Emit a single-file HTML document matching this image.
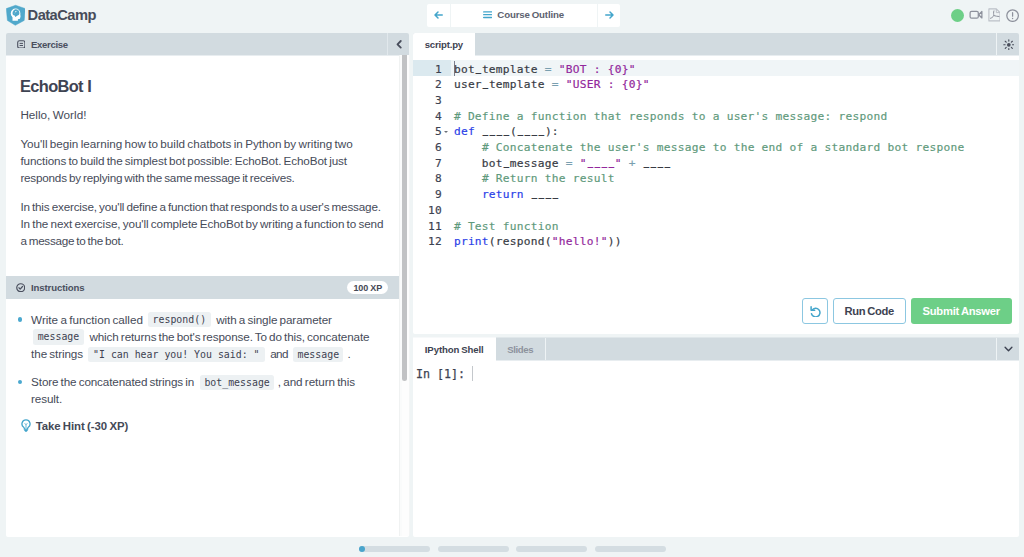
<!DOCTYPE html>
<html lang="en">
<head>
<meta charset="utf-8">
<title>EchoBot I - DataCamp</title>
<style>
*{box-sizing:border-box;margin:0;padding:0}
html,body{width:1024px;height:557px;overflow:hidden}
body{background:#eff4f5;font-family:"Liberation Sans",sans-serif;color:#3d4251;position:relative}
.abs{position:absolute}
.nw{white-space:nowrap}
.hdr{background:#d2dbe0}
/* small bold labels */
.lb{position:absolute;font-weight:bold;font-size:9.6px;line-height:12px;white-space:nowrap;color:#4a4f5e}
/* body text */
.p{position:absolute;font-size:11.7px;line-height:17px;word-spacing:-.9px;color:#464b59;white-space:nowrap}
.chip{position:absolute;height:15.2px;border-radius:2.5px;background:#edf1f3;font-family:"DejaVu Sans Mono","Liberation Mono",monospace;font-size:9.9px;line-height:15.2px;text-align:center;color:#3d4251;white-space:pre}
.dot{position:absolute;width:4.4px;height:4.4px;border-radius:50%;background:#4aa8cf}
/* panels */
#lp-h{left:6px;top:33px;width:403px;height:22px;border-radius:2px 2px 0 0}
#lp{left:6px;top:55px;width:403px;height:482px;background:#fff;border-radius:0 0 2px 2px}
#ed-h{left:413px;top:33px;width:606px;height:22px;border-radius:2px 2px 0 0}
#ed{left:413px;top:55px;width:606px;height:279px;background:#fff;border-radius:0 0 2px 2px}
.tab{position:absolute;top:0;height:100%;background:#fff}
.code{font-family:"DejaVu Sans Mono","Liberation Mono",monospace;font-size:11.2px;letter-spacing:.258px;line-height:15.7px;color:#383b44;white-space:pre}
.code{-webkit-text-stroke:.18px currentColor}
.code u{display:inline-block;text-decoration:none;transform:translateY(-1.700px) scaleX(.78);-webkit-text-stroke:.4px currentColor}
.c{color:#5f9a7c}.s{color:#93289c}.k{color:#2b3fe8}.o{color:#7a9fb0}
#gut{left:413.5px;top:61.5px;width:28.5px;text-align:right;color:#3d4251}
#src{left:453.9px;top:61.5px}
.btn{position:absolute;top:298px;height:26px;border-radius:3px}
.btn .lb{top:7px;font-size:11.2px;line-height:13px;word-spacing:-.7px}
#co-h{left:413px;top:338px;width:606px;height:22px}
#co{left:413px;top:360px;width:606px;height:177px;background:#fff;border-radius:0 0 2px 2px}
.pill{position:absolute;top:545.8px;height:5.8px;width:71px;border-radius:3px;background:#d4dde2}
</style>
</head>
<body>

<!-- ===== top bar ===== -->
<svg class="abs" style="left:5.5px;top:4.3px" width="19.8" height="21.8" viewBox="0 0 19.8 21.8">
  <path d="M9.570 1.300 L19.300 4.600 L18.200 16.400 L9.300 21.300 L1.400 16.400 L.300 4.600 Z" fill="#50a8cb" stroke="#50a8cb" stroke-width=".5" stroke-linejoin="round"/>
  <circle cx="9.570" cy="9.400" r="4.800" fill="#fff"/>
  <path d="M5.400 10.300 L6.500 13.200 L6.500 16.800 L11.900 16.800 L11.900 15.300 L14 14.800 L14.600 12.300 L14.100 10 Z" fill="#fff"/>
  <path d="M9.500 5.300 a3.900 3.900 0 0 1 3.900 3.900 c0 1.200-.7 2-1.800 2.400 l-2.300 1.400 -.7-1.500 -1.600-.5 a3.900 3.900 0 0 1 2.500-5.700z" fill="#50a8cb"/>
  <circle cx="9.800" cy="7.600" r=".600" fill="#fff"/>
  <path d="M6.300 8.100l1.800-1.900M7.800 10l3.700-3.600" stroke="#fff" stroke-width=".35" opacity=".55"/>
</svg>
<div class="abs nw" style="left:27.600px;top:5.700px;font-weight:bold;font-size:14.700px;line-height:18px;letter-spacing:-.55px;color:#474c5a">DataCamp</div>

<div class="abs" style="left:427px;top:4px;width:193px;height:23px;background:#fff;border-radius:2px">
  <div class="abs" style="left:22.500px;top:0;width:1px;height:23px;background:#eff4f5"></div>
  <div class="abs" style="left:170.300px;top:0;width:1px;height:23px;background:#eff4f5"></div>
  <svg class="abs" style="left:6.500px;top:6.800px" width="9" height="8" viewBox="0 0 18 16"><path d="M16.500 8H3M8 2L2 8l6 6" fill="none" stroke="#43a5cb" stroke-width="2.900" stroke-linecap="round" stroke-linejoin="round"/></svg>
  <svg class="abs" style="left:55.900px;top:7.400px" width="9.200" height="7.400" viewBox="0 0 18.400 14.800"><path d="M1.300 1.800h15.800M1.300 7.400h15.800M1.300 13h15.800" fill="none" stroke="#43a5cb" stroke-width="2.700" stroke-linecap="round"/></svg>
  <div class="lb" style="left:70.300px;top:5.100px;font-size:9.700px;letter-spacing:-.15px;word-spacing:-.6px;color:#5d626f">Course Outline</div>
  <svg class="abs" style="left:178.200px;top:6.800px" width="9" height="8" viewBox="0 0 18 16"><path d="M1.500 8H15M10 2l6 6-6 6" fill="none" stroke="#43a5cb" stroke-width="2.900" stroke-linecap="round" stroke-linejoin="round"/></svg>
</div>

<div class="abs" style="left:950.500px;top:8.500px;width:13px;height:13px;border-radius:50%;background:#6dcf87"></div>
<svg class="abs" style="left:968.600px;top:10.300px" width="14.400" height="9.200" viewBox="0 0 14.400 9.200"><rect x="1.100" y="1.300" width="8.200" height="6.900" rx="1.500" fill="none" stroke="#8d919c" stroke-width="1.250"/><path d="M9.700 4.750L12.900 1.500V8Z" fill="none" stroke="#8d919c" stroke-width="1.250" stroke-linejoin="round"/></svg>
<svg class="abs" style="left:987.600px;top:8.100px" width="12.800" height="13.800" viewBox="0 0 12.800 13.800"><path d="M.900 .900h7.400l3.700 3.700v8.300H.900z" fill="none" stroke="#bcc0c7" stroke-width="1.100" stroke-linejoin="round"/><path d="M8.300 .900v3.700h3.700" fill="none" stroke="#bcc0c7" stroke-width="1" stroke-linejoin="round"/><path d="M5.900 2.900C5.300 4.600 5.700 6.200 5.800 7.600C4.900 9.100 3.700 10 2.500 10.300M5.800 7.600C7.500 8.200 9.400 8.300 11 8.500" fill="none" stroke="#8d919c" stroke-width="1" stroke-linecap="round" stroke-linejoin="round"/></svg>
<svg class="abs" style="left:1006.400px;top:8.600px" width="13.200" height="13.200" viewBox="0 0 13.200 13.200"><circle cx="6.600" cy="6.600" r="5.800" fill="none" stroke="#8d919c" stroke-width="1.250"/><path d="M6.600 3.700v3.500" stroke="#8d919c" stroke-width="1.250" stroke-linecap="round"/><circle cx="6.600" cy="9.400" r=".750" fill="#8d919c"/></svg>

<!-- ===== left panel ===== -->
<div id="lp-h" class="abs hdr">
  <svg class="abs" style="left:10.500px;top:6.700px" width="8.600" height="8.800" viewBox="0 0 8.600 8.800"><rect x=".700" y=".700" width="7.200" height="7.400" rx="1.800" fill="none" stroke="#4a4f5e" stroke-width="1.100"/><path d="M2.600 3.400h3.400M2.600 5.500h3.400" stroke="#4a4f5e" stroke-width="1"/></svg>
  <div class="lb" style="left:25px;top:5.800px;letter-spacing:-.35px">Exercise</div>
  <div class="abs" style="left:381px;top:0;width:1px;height:22px;background:#e1e8ec"></div>
  <svg class="abs" style="left:389.500px;top:7.300px" width="6" height="8.600" viewBox="0 0 12 17.200"><path d="M9.500 2L3 8.600l6.500 6.600" fill="none" stroke="#484d5b" stroke-width="3.600" stroke-linecap="round" stroke-linejoin="round"/></svg>
</div>
<div id="lp" class="abs">
  <div class="abs" style="left:0;top:0;width:403px;height:1px;background:#e8edf0"></div>
  <div class="abs" style="left:393px;top:0;width:10.500px;height:481.300px;background:linear-gradient(90deg,#fafbfb 0,#fafbfb 2.400px,#fdfdfd 2.400px,#fdfdfd 8.600px,#f3f5f5 8.600px);border-left:1px solid #f0f2f2;border-radius:0 0 2px 0"></div>
  <div class="abs" style="left:396.400px;top:0;width:5.100px;height:326.300px;background:#c1c2c4;border-radius:0 0 2.600px 2.600px"></div>

  <div class="abs nw" style="left:14.100px;top:18.5px;font-size:16.400px;font-weight:bold;line-height:24px;letter-spacing:-.66px;word-spacing:.6px;color:#3f4453">EchoBot I</div>
  <div class="p" style="left:14.400px;top:51.3px;letter-spacing:.02px">Hello, World!</div>
  <div class="p" style="left:14.400px;top:80.2px;letter-spacing:-.01px">You'll begin learning how to build chatbots in Python by writing two</div>
  <div class="p" style="left:14.400px;top:97.3px;letter-spacing:-.105px">functions to build the simplest bot possible: EchoBot. EchoBot just</div>
  <div class="p" style="left:14.400px;top:114.4px;letter-spacing:-.21px">responds by replying with the same message it receives.</div>
  <div class="p" style="left:14.400px;top:142.6px;letter-spacing:-.173px">In this exercise, you'll define a function that responds to a user's message.</div>
  <div class="p" style="left:14.400px;top:159.7px;letter-spacing:-.087px">In the next exercise, you'll complete EchoBot by writing a function to send</div>
  <div class="p" style="left:14.400px;top:176.8px;letter-spacing:-.277px">a message to the bot.</div>

  <div class="abs hdr" style="left:0;top:221.1px;width:393px;height:22.900px">
    <svg class="abs" style="left:10px;top:6.800px" width="9.400" height="9.400" viewBox="0 0 9.400 9.400"><circle cx="4.700" cy="4.700" r="3.950" fill="none" stroke="#4a4f5e" stroke-width="1.200"/><path d="M2.900 4.800l1.300 1.300 2.300-2.600" fill="none" stroke="#4a4f5e" stroke-width="1.200" stroke-linecap="round" stroke-linejoin="round"/></svg>
    <div class="lb" style="left:25px;top:5.700px;letter-spacing:-.11px">Instructions</div>
    <div class="abs" style="left:341.100px;top:4.500px;width:40.600px;height:13.500px;border-radius:6.800px;background:#fff"></div>
    <div class="lb" style="left:347.400px;top:5.500px;font-size:9px;letter-spacing:-.05px;word-spacing:-.5px;color:#444957">100 XP</div>
  </div>

  <div class="dot" style="left:11.600px;top:262.3px"></div>
  <div class="p" style="left:25.100px;top:256.0px;letter-spacing:-.01px">Write a function called</div>
  <div class="chip" style="left:142px;top:257.3px;width:62.700px">respond()</div>
  <div class="p" style="left:210.200px;top:256.0px;letter-spacing:-.106px">with a single parameter</div>

  <div class="chip" style="left:27px;top:274.4px;width:50.900px">message</div>
  <div class="p" style="left:83.400px;top:273.1px;letter-spacing:-.126px">which returns the bot's response. To do this, concatenate</div>

  <div class="p" style="left:25.100px;top:290.2px;letter-spacing:-.103px">the strings</div>
  <div class="chip" style="left:81.900px;top:291.5px;width:176.800px">"I can hear you! You said: "</div>
  <div class="p" style="left:264.200px;top:290.2px;letter-spacing:-.6px">and</div>
  <div class="chip" style="left:287.100px;top:291.5px;width:50.400px">message</div>
  <div class="p" style="left:341.400px;top:290.2px">.</div>

  <div class="dot" style="left:11.600px;top:324.5px"></div>
  <div class="p" style="left:25.100px;top:318.2px;letter-spacing:-.13px">Store the concatenated strings in</div>
  <div class="chip" style="left:194px;top:319.5px;width:74.200px">bot_message</div>
  <div class="p" style="left:271.800px;top:318.2px;letter-spacing:-.072px">, and return this</div>
  <div class="p" style="left:25.100px;top:335.3px;letter-spacing:-.133px">result.</div>

  <svg class="abs" style="left:14.700px;top:364.4px" width="10" height="13.200" viewBox="0 0 10 13.200"><path d="M5 .900a4 4 0 0 0-2.300 7.300c.5.400.7.900.7 1.500v.4h3.200v-.4c0-.6.200-1.100.7-1.500A4 4 0 0 0 5 .9z" fill="none" stroke="#43a5cb" stroke-width="1.300"/><path d="M3.300 10.600h3.400v.9l-.9 1.200h-1.600l-.9-1.200z" fill="#43a5cb"/><path d="M5 8.800V5.600M3.900 4.500L5 5.600l1.100-1.100" fill="none" stroke="#43a5cb" stroke-width=".8" stroke-linecap="round"/></svg>
  <div class="abs nw" style="left:29.700px;top:362.7px;font-size:11.400px;font-weight:bold;line-height:17px;letter-spacing:-.08px;word-spacing:-.7px;color:#444957">Take Hint (-30 XP)</div>
</div>

<!-- ===== editor ===== -->
<div id="ed-h" class="abs hdr">
  <div class="tab" style="left:0;width:62px;border-radius:2px 0 0 0"></div>
  <div class="lb" style="left:11.700px;top:6.100px;letter-spacing:-.19px;color:#3d4251">script.py</div>
  <div class="abs" style="left:583px;top:0;width:1px;height:22px;background:#eef3f5"></div>
  <svg class="abs" style="left:589.900px;top:5.900px" width="11.600" height="11.600" viewBox="0 0 23.200 23.200"><circle cx="11.600" cy="11.600" r="3.700" fill="#4a4f5c"/><path d="M11.600 1.600v2.600M11.600 19v2.600M1.600 11.600h2.600M19 11.600h2.600M4.500 4.500l1.900 1.900M16.800 16.800l1.900 1.900M4.500 18.700l1.900-1.900M16.800 6.400l1.900-1.900" stroke="#4a4f5c" stroke-width="2.300" stroke-linecap="round"/></svg>
</div>
<div id="ed" class="abs">
  <div class="abs" style="left:62px;top:0;width:544px;height:1px;background:#e8edf0"></div>
  <div class="abs" style="left:0;top:5px;width:606px;height:16px;background:#f0f5f7"></div>
  <div class="abs" style="left:0;top:5px;width:38px;height:16px;background:#dbe9ef"></div>
  <div class="abs" style="left:41px;top:6px;width:1px;height:15px;background:#7b8090"></div>
</div>
<div id="gut" class="abs code">1
2
3
4
5
6
7
8
9
10
11
12</div>
<div class="abs" style="left:443.800px;top:131px;width:0;height:0;border-left:2px solid transparent;border-right:2px solid transparent;border-top:2.500px solid #6b7078"></div>
<div id="src" class="abs code">bot<u>_</u>template <span class="o">=</span> <span class="s">"BOT : {0}"</span>
user<u>_</u>template <span class="o">=</span> <span class="s">"USER : {0}"</span>

<span class="c"># Define a function that responds to a user's message: respond</span>
<span class="k">def</span> <u>_</u><u>_</u><u>_</u><u>_</u>(<u>_</u><u>_</u><u>_</u><u>_</u>):
    <span class="c"># Concatenate the user's message to the end of a standard bot respone</span>
    bot<u>_</u>message <span class="o">=</span> <span class="s">"<u>_</u><u>_</u><u>_</u><u>_</u>"</span> <span class="o">+</span> <u>_</u><u>_</u><u>_</u><u>_</u>
    <span class="c"># Return the result</span>
    <span class="k">return</span> <u>_</u><u>_</u><u>_</u><u>_</u>

<span class="c"># Test function</span>
<span class="k">print</span>(respond(<span class="s">"hello!"</span>))</div>

<div class="btn" style="left:802px;width:26px;background:#fff;border:1px solid #8cc7e1">
  <svg class="abs" style="left:6.300px;top:5.500px" width="11.500" height="12.500" viewBox="0 0 11.500 12.500"><path d="M3.100 5.200A4.300 4.300 0 1 1 2.500 8.700" fill="none" stroke="#43a5cb" stroke-width="1.500" stroke-linecap="round"/><path d="M2.100 1.700v3.600h3.600" fill="none" stroke="#43a5cb" stroke-width="1.500" stroke-linecap="round" stroke-linejoin="round"/></svg>
</div>
<div class="btn" style="left:833px;width:73px;background:#fff;border:1px solid #8cc7e1">
  <div class="lb" style="left:10.600px;top:6.300px;letter-spacing:-.366px;color:#3d4251">Run Code</div>
</div>
<div class="btn" style="left:911px;width:101px;background:#6dcf87">
  <div class="lb" style="left:11.500px;letter-spacing:-.218px;color:#fff">Submit Answer</div>
</div>

<!-- ===== console ===== -->
<div class="abs" style="left:413px;top:337px;width:606px;height:1px;background:#e0e7ea;border-radius:2px 2px 0 0"></div>
<div class="abs" style="left:413px;top:337px;width:83px;height:1px;background:#f7f9fa"></div>
<div id="co-h" class="abs hdr">
  <div class="tab" style="left:0;width:83px"></div>
  <div class="lb" style="left:11.800px;top:5.900px;letter-spacing:-.1px;word-spacing:-.6px;color:#3d4251">IPython Shell</div>
  <div class="lb" style="left:94.300px;top:5.900px;letter-spacing:-.39px;color:#8d929d">Slides</div>
  <div class="abs" style="left:132px;top:0;width:1px;height:22px;background:#eef3f5"></div>
  <div class="abs" style="left:583px;top:0;width:1px;height:22px;background:#eef3f5"></div>
  <svg class="abs" style="left:590.700px;top:8.200px" width="9" height="6" viewBox="0 0 18 12"><path d="M2.200 2.500l6.800 6.800 6.800-6.800" fill="none" stroke="#3d4251" stroke-width="2.800" stroke-linecap="round" stroke-linejoin="round"/></svg>
</div>
<div id="co" class="abs">
  <div class="abs" style="left:83px;top:0;width:523px;height:1px;background:#e8edf0"></div>
  <div class="abs code" style="left:3.100px;top:7.100px;font-size:11.630px;letter-spacing:0;color:#3d4251;-webkit-text-stroke:.25px #3d4251">In [1]: </div>
  <div class="abs" style="left:59px;top:6px;width:1px;height:15px;background:#c4c8cc"></div>
</div>

<!-- ===== progress ===== -->
<div class="pill" style="left:359px"></div>
<div class="pill" style="left:437.500px"></div>
<div class="pill" style="left:516.400px"></div>
<div class="pill" style="left:595px"></div>
<div class="abs" style="left:358.900px;top:545.500px;width:6.300px;height:6.300px;border-radius:50%;background:#4aa5cc"></div>

</body>
</html>
